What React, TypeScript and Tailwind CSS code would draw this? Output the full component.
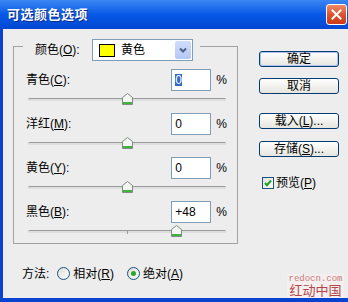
import React from "react";

const rows = [
  { label: "青色", key: "C", text: "0", value: 0, selected: true },
  { label: "洋红", key: "M", text: "0", value: 0 },
  { label: "黄色", key: "Y", text: "0", value: 0 },
  { label: "黑色", key: "B", text: "+48", value: 48 },
];

function Thumb() {
  return (
    <svg width="11" height="12" viewBox="0 0 11 12">
      <path d="M0.5 4.5 L5.5 0.5 L10.5 4.5 L10.5 11.5 L0.5 11.5 Z" fill="#f3f6f1" stroke="#7d8a86" />
      <rect x="1" y="9" width="9" height="2" fill="#3fb43f" />
    </svg>
  );
}

function Slider({ value }: { value: number }) {
  return (
    <div className="relative flex h-[16px] items-center pl-[14px] pr-[11px]">
      <div className="h-[3px] w-full rounded-full border-t border-[#9a9a9a] bg-[#dedede]" />
      <div className="absolute left-[113px] top-[8px] h-[3px] w-px bg-[#9a9a9a]" />
      <div className="absolute top-[2px]" style={{ left: 108 + value * 1.03 }}>
        <Thumb />
      </div>
    </div>
  );
}

function Button({ children, primary }: { children: React.ReactNode; primary?: boolean }) {
  return (
    <div
      className={
        "flex h-[16px] w-[80px] items-center justify-center rounded-[3px] border border-[#003C74] bg-linear-to-b from-white to-[#e6e5df] text-[12px] leading-none " +
        (primary ? "shadow-[inset_0_0_0_1px_#a9c4f0]" : "")
      }
    >
      {children}
    </div>
  );
}

function Radio({ checked }: { checked?: boolean }) {
  return (
    <div className="flex h-[13px] w-[13px] items-center justify-center rounded-full border border-[#1C5180] bg-linear-to-br from-[#dcdcd6] to-white">
      {checked && <div className="h-[5px] w-[5px] rounded-full bg-[#2aa82a]" />}
    </div>
  );
}

export default function App() {
  return (
    <div className="flex h-[302px] w-[348px] flex-col overflow-hidden font-['Liberation_Sans','Noto_Sans_CJK_SC',sans-serif] text-[12px] text-black">
      <div className="flex h-[29px] shrink-0 items-center justify-between bg-linear-to-b from-[#3a86f4] via-[#0659e6] to-[#0447d2] pl-[7px] pr-[1px]">
        <span className="text-[13px] font-bold leading-none tracking-[0.5px] text-white [text-shadow:1px_1px_#0b2a8a]">
          可选颜色选项
        </span>
        <div className="flex h-[21px] w-[21px] items-center justify-center rounded-[3px] border border-white bg-linear-to-b from-[#ec8a66] via-[#e0532d] to-[#c8391b]">
          <svg width="11" height="11" viewBox="0 0 11 11">
            <path d="M1.5 1.5 L9.5 9.5 M9.5 1.5 L1.5 9.5" stroke="white" strokeWidth="2" strokeLinecap="square" />
          </svg>
        </div>
      </div>

      <div className="relative flex flex-1 flex-col border-b-[4px] border-l-[3px] border-[#0843cf] bg-[#ededed]">
        <div className="flex pl-[10px] pt-[17px]">
          <div className="relative flex h-[198px] w-[225px] flex-col gap-[6px] border border-[#a2a2a2] pt-[22px]">
            <div className="absolute left-[9px] top-[-8px] flex items-center bg-[#ededed] pl-[12px] pr-[7px]">
              <span className="w-[57px] leading-none">
                颜色(<span className="underline">O</span>):
              </span>
              <div className="flex h-[22px] w-[101px] items-center border border-[#7F9DB9] bg-white pl-[6px]">
                <div className="h-[13px] w-[16px] border border-black bg-[#ffff00]" />
                <span className="ml-[6px] leading-none">黄色</span>
                <div className="ml-auto mr-[1px] flex h-[18px] w-[16px] items-center justify-center rounded-[2px] bg-linear-to-b from-[#d0ddfb] to-[#b4c8f6]">
                  <svg width="8" height="6" viewBox="0 0 8 6">
                    <path d="M1 1.5 L4 4.5 L7 1.5" fill="none" stroke="#4d6185" strokeWidth="2" />
                  </svg>
                </div>
              </div>
            </div>

            {rows.map((r) => (
              <div key={r.key} className="flex flex-col">
                <div className="flex h-[22px] items-center pl-[12px] pr-[10px]">
                  <span className="leading-none">
                    {r.label}(<span className="underline">{r.key}</span>):
                  </span>
                  <div className="ml-auto flex h-[22px] w-[40px] items-center border border-[#7F9DB9] bg-white pl-[3px]">
                    <span className={"leading-none " + (r.selected ? "bg-[#316ac5] text-white" : "")}>{r.text}</span>
                  </div>
                  <span className="ml-[5px] leading-none">%</span>
                </div>
                <Slider value={r.value} />
              </div>
            ))}
          </div>

          <div className="ml-[21px] mt-[5px] flex flex-col">
            <Button primary>确定</Button>
            <div className="mt-[11px]">
              <Button>取消</Button>
            </div>
            <div className="mt-[19px]">
              <Button>
                载入(<span className="underline">L</span>)...
              </Button>
            </div>
            <div className="mt-[12px]">
              <Button>
                存储(<span className="underline">S</span>)...
              </Button>
            </div>
            <div className="ml-[3px] mt-[20px] flex items-center gap-[2px]">
              <div className="flex h-[12px] w-[12px] items-center justify-center border border-[#1C5180] bg-linear-to-br from-[#e0e0da] to-white">
                <svg width="8" height="8" viewBox="0 0 8 8">
                  <path d="M1 4 L3 6.2 L7 1.5" fill="none" stroke="#21a121" strokeWidth="2" />
                </svg>
              </div>
              <span className="leading-none">
                预览(<span className="underline">P</span>)
              </span>
            </div>
          </div>
        </div>

        <div className="ml-[19px] mt-[23px] flex items-center">
          <span className="leading-none">方法:</span>
          <div className="ml-[8px] flex items-center gap-[3px]">
            <Radio />
            <span className="leading-none">
              相对(<span className="underline">R</span>)
            </span>
          </div>
          <div className="ml-[13px] flex items-center gap-[3px]">
            <Radio checked />
            <span className="leading-none">
              绝对(<span className="underline">A</span>)
            </span>
          </div>
        </div>

        <div className="absolute bottom-0 right-[4px] flex h-[24px] w-[57px] flex-col items-center justify-center bg-[#f6efef]">
          <span className="font-['Liberation_Mono',monospace] text-[9px] leading-[9px] text-[#c77a7a]">redocn.com</span>
          <span className="text-[13px] leading-[14px] tracking-[0px] text-[#b2474a]">红动中国</span>
        </div>
      </div>
    </div>
  );
}
